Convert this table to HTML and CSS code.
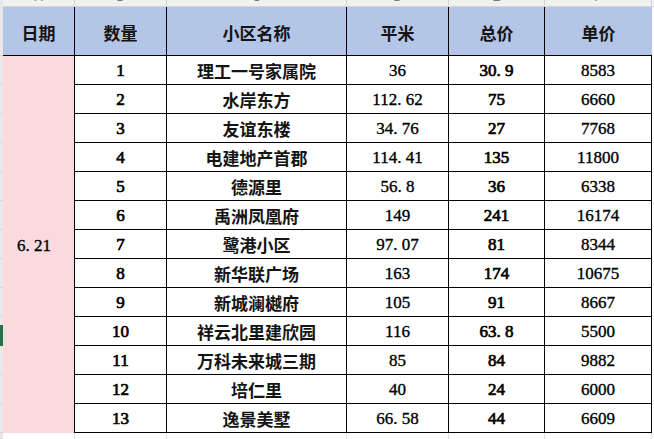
FILE: index.html
```html
<!DOCTYPE html>
<html lang="zh">
<head>
<meta charset="utf-8">
<link rel="stylesheet" href="styles.css">
</head>
<body>
<div class="sheet">
  <div class="corner"></div>
  <div class="colheads">
    <div class="ch"><span>A</span></div>
    <div class="ch"><span>B</span></div>
    <div class="ch"><span>C</span></div>
    <div class="ch"><span>D</span></div>
    <div class="ch"><span>E</span></div>
    <div class="ch last"><span>F</span></div>
  </div>
  <div class="rowheads">
    <div class="rh h"></div>
    <div class="rh"></div><div class="rh"></div><div class="rh"></div><div class="rh"></div>
    <div class="rh"></div><div class="rh"></div><div class="rh"></div><div class="rh"></div>
    <div class="rh"></div><div class="rh active"></div><div class="rh"></div><div class="rh"></div>
    <div class="rh"></div><div class="rh tail"></div>
  </div>
  <div class="grid">
    <div class="hd">日期</div>
    <div class="hd">数量</div>
    <div class="hd">小区名称</div>
    <div class="hd">平米</div>
    <div class="hd">总价</div>
    <div class="hd last">单价</div>

    <div class="date">6<span class="dot">.</span>21</div>

    <div class="c b">1</div><div class="c zh">理工一号家属院</div><div class="c">36</div><div class="c b">30<span class="dot">.</span>9</div><div class="c">8583</div>
    <div class="c b">2</div><div class="c zh">水岸东方</div><div class="c">112<span class="dot">.</span>62</div><div class="c b">75</div><div class="c">6660</div>
    <div class="c b">3</div><div class="c zh">友谊东楼</div><div class="c">34<span class="dot">.</span>76</div><div class="c b">27</div><div class="c">7768</div>
    <div class="c b">4</div><div class="c zh">电建地产首郡</div><div class="c">114<span class="dot">.</span>41</div><div class="c b">135</div><div class="c">11800</div>
    <div class="c b">5</div><div class="c zh">德源里</div><div class="c">56<span class="dot">.</span>8</div><div class="c b">36</div><div class="c">6338</div>
    <div class="c b">6</div><div class="c zh">禹洲凤凰府</div><div class="c">149</div><div class="c b">241</div><div class="c">16174</div>
    <div class="c b">7</div><div class="c zh">鹭港小区</div><div class="c">97<span class="dot">.</span>07</div><div class="c b">81</div><div class="c">8344</div>
    <div class="c b">8</div><div class="c zh">新华联广场</div><div class="c">163</div><div class="c b">174</div><div class="c">10675</div>
    <div class="c b">9</div><div class="c zh">新城澜樾府</div><div class="c">105</div><div class="c b">91</div><div class="c">8667</div>
    <div class="c b">10</div><div class="c zh">祥云北里建欣园</div><div class="c">116</div><div class="c b">63<span class="dot">.</span>8</div><div class="c">5500</div>
    <div class="c b">11</div><div class="c zh">万科未来城三期</div><div class="c">85</div><div class="c b">84</div><div class="c">9882</div>
    <div class="c b">12</div><div class="c zh">培仁里</div><div class="c">40</div><div class="c b">24</div><div class="c">6000</div>
    <div class="c b">13</div><div class="c zh">逸景美墅</div><div class="c">66<span class="dot">.</span>58</div><div class="c b">44</div><div class="c">6609</div>

    <div class="t"></div><div class="t"></div><div class="t"></div><div class="t"></div><div class="t"></div><div class="t"></div>
  </div>
</div>
</body>
</html>
```
FILE: styles.css
```css
html, body {
  margin: 0;
  padding: 0;
  background: #ffffff;
}
body {
  width: 654px;
  height: 439px;
  overflow: hidden;
}
.sheet {
  display: grid;
  grid-template-columns: 3px 649px 2px;
  grid-template-rows: 7px 432px;
}
.corner {
  background: #e9e9e9;
}
.colheads {
  display: grid;
  grid-template-columns: 72px 92px 180px 102px 96px 107px;
  background: #f1f1f1;
  border-bottom: 1px solid #d6d6d6;
  box-sizing: border-box;
  grid-column: 2 / 4;
}
.ch {
  height: 6px;
  overflow: hidden;
  border-right: 1px solid #d4d4d4;
  box-sizing: border-box;
  text-align: center;
}
.ch span {
  display: block;
  margin-top: -9px;
  line-height: 12px;
  font-family: "Liberation Sans", sans-serif;
  font-size: 12px;
  color: #7a7a7a;
}
.rowheads {
  display: grid;
  grid-template-rows: 49px repeat(13, 29px) 6px;
  background: #e8e8e8;
}
.rh {
  border-bottom: 1px solid #d8d8d8;
  box-sizing: border-box;
}
.rh.active {
  background: #217346;
  margin-top: 8px;
  height: 21px;
  border-bottom: none;
}
.grid {
  display: grid;
  grid-template-columns: 72px 92px 180px 102px 96px 107px;
  grid-template-rows: 49px repeat(13, 29px) 6px;
  font-family: "Liberation Serif", "Noto Sans CJK SC", serif;
  font-size: 17px;
  color: #000000;
}
.hd {
  background: #b4c6e7;
  border-right: 1px solid #000;
  border-bottom: 1px solid #000;
  box-sizing: border-box;
  display: flex;
  align-items: center;
  justify-content: center;
  padding-top: 3px;
  font-family: "Noto Sans CJK SC", sans-serif;
  font-weight: 700;
  font-size: 17px;
  color: #141414;
}
.hd.last {
  border-right: none;
}
.date {
  grid-column: 1;
  grid-row: 2 / 15;
  background: #fadadd;
  border-right: 1px solid #000;
  box-sizing: border-box;
  display: flex;
  align-items: center;
  padding-left: 14px;
  padding-top: 2px;
  -webkit-text-stroke: 0.35px #000;
}
.c {
  border-right: 1px solid #000;
  border-bottom: 1px solid #000;
  box-sizing: border-box;
  display: flex;
  align-items: center;
  justify-content: center;
  padding-top: 1px;
  white-space: nowrap;
  -webkit-text-stroke: 0.35px #000;
}
.c.b {
  font-weight: 400;
  -webkit-text-stroke: 0.7px #000;
}
.c.zh {
  font-family: "Noto Sans CJK SC", sans-serif;
  font-weight: 700;
  font-size: 17px;
  color: #141414;
  -webkit-text-stroke: 0;
}
.dot {
  display: inline-block;
  width: 0.5em;
  text-align: left;
}
.t {
  border-right: 1px solid #e0e0e0;
  box-sizing: border-box;
}
```
